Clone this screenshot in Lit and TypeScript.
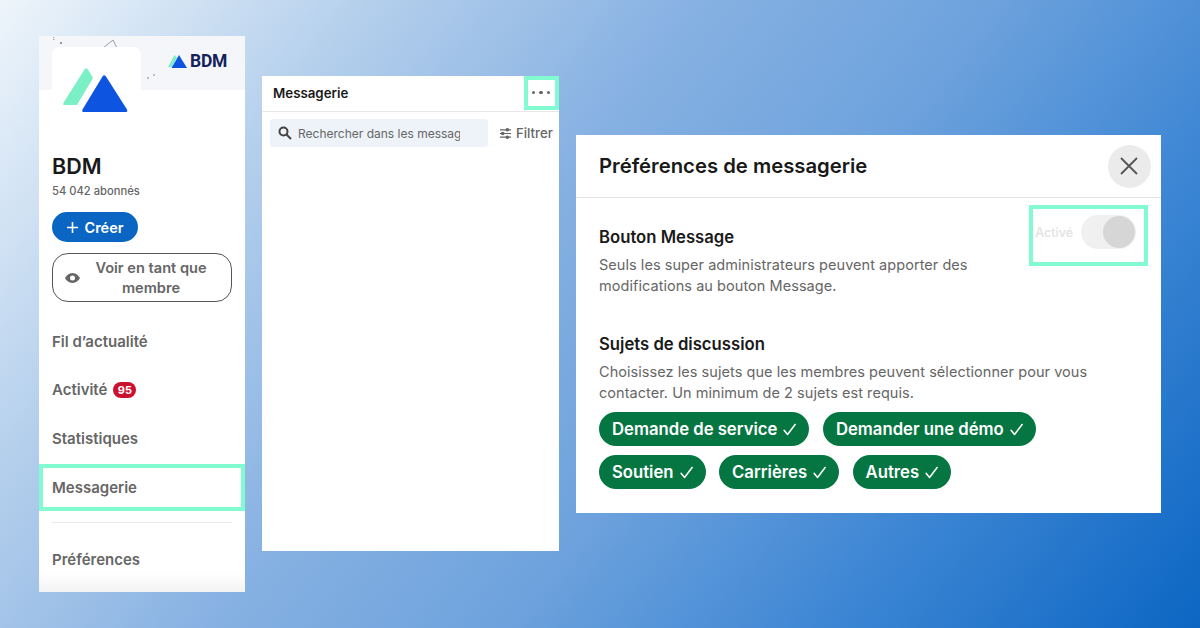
import { LitElement, html, css } from "lit";
import { customElement } from "lit/decorators.js";

const check = html`<svg class="chk" viewBox="0 0 16 16" fill="none" stroke="#fff" stroke-width="1.6" stroke-linecap="round" stroke-linejoin="round"><path d="M2.2 8.8 L5.9 13.4 L14 2.6"/></svg>`;

@customElement("app-root")
export class AppRoot extends LitElement {
  static styles = css`
    :host { display: block; width: 1200px; height: 628px; overflow: hidden; font-family: Inter, "Liberation Sans", sans-serif; }
    .page { box-sizing: border-box; width: 1200px; height: 628px; display: flex; align-items: flex-start; gap: 17px; padding-left: 39px;
      background:
        linear-gradient(128deg, #eef5fb 0%, #b4cfec 22%, #85b0e2 42%, #6fa3dd 58%, #3d86d4 78%, #0c66c3 100%); }
    .card { background: #fff; box-sizing: border-box; flex: none; position: relative; }

    .side { width: 206px; height: 556px; margin-top: 36px; display: flex; flex-direction: column; background: linear-gradient(#fff 536px, #f3f3f4 556px); }
    .banner { box-sizing: border-box; height: 54px; background: #f5f6f9; flex: none; display: flex; justify-content: flex-end; align-items: center; padding: 0 18px 4px 0; gap: 3px; position: relative; }
    .banner .word { font: 700 17.5px Roboto, sans-serif; color: #16225c; letter-spacing: -0.3px; line-height: 14px; }
    .deco { position: absolute; left: 0; top: 0; width: 130px; height: 54px; }
    .logo { position: absolute; left: 13px; top: 11px; width: 89px; height: 84px; background: #fff; border-radius: 8px 8px 0 0; }
    .logo svg { display: block; }
    .sbody { padding: 63px 13px 0; display: flex; flex-direction: column; }
    .name { font-size: 21.5px; font-weight: 600; line-height: 26px; color: #191919; }
    .subs { font-size: 11.2px; font-weight: 500; line-height: 16px; color: #666; margin-top: 4px; }
    .create { margin-top: 13px; width: 86px; height: 30px; border-radius: 15px; background: #0a66c2; color: #fff; font-size: 14.5px; font-weight: 600; display: flex; align-items: center; justify-content: center; gap: 5px; }
    .view { margin-top: 11px; height: 49px; border: 1px solid #555; border-radius: 16px; box-sizing: border-box; display: flex; align-items: center; padding-left: 12px; color: #666; font-size: 14.6px; font-weight: 600; line-height: 20px; }
    .view span { flex: 1; text-align: center; padding-right: 9px; }
    .nav { display: flex; flex-direction: column; margin-top: 15px; }
    .nav > div { height: 48.6px; display: flex; align-items: center; gap: 6px; font-size: 15px; font-weight: 600; color: #666; }
    .badge { background: #cb112d; color: #fff; font-size: 11px; font-weight: 700; height: 16px; width: 23px; border-radius: 8px; display: flex; align-items: center; justify-content: center; }
    .hl { position: absolute; border: 4px solid #82fbd0; box-sizing: border-box; }
    .h1 { left: 0; top: 428px; width: 206px; height: 47px; }
    .sep { height: 1px; background: #e8e8e8; margin-top: 11px; }
    .prefs { margin-top: 12px; height: 48px; }

    .msg { width: 297px; height: 475px; margin-top: 76px; }
    .mhead { box-sizing: border-box; height: 36px; border-bottom: 1px solid #e8e8e8; display: flex; align-items: center; padding: 0 9px 2px 11px; justify-content: space-between; }
    .mhead b { font-size: 13.3px; font-weight: 600; color: #191919; }
    .dots { display: flex; gap: 4px; }
    .dots i { width: 3.5px; height: 3.5px; border-radius: 50%; background: #666; }
    .h2 { right: 0; top: 0; width: 35px; height: 34px; }
    .mrow { display: flex; align-items: center; padding: 7px 0 0 8px; gap: 11px; }
    .search { flex: none; width: 218px; height: 28px; box-sizing: border-box; background: #edf3f8; border-radius: 3px; display: flex; align-items: center; padding-left: 8px; gap: 6px; font-size: 12px; color: #666; overflow: hidden; white-space: nowrap; }
    .search span { width: 162px; overflow: hidden; }
    .filter { display: flex; align-items: center; gap: 4px; font-size: 13.2px; color: #666; font-weight: 500; white-space: nowrap; }

    .prefsc { width: 585px; height: 378px; margin-top: 135px; padding: 0; }
    .phead { box-sizing: border-box; height: 63px; border-bottom: 1px solid #e3e3e3; display: flex; align-items: center; justify-content: space-between; padding: 0 10.5px 2px 23px; }
    .phead h2 { margin: 0; font-size: 20.3px; font-weight: 600; color: #191919; }
    .close { width: 43px; height: 43px; border-radius: 50%; background: #ebebeb; display: flex; align-items: center; justify-content: center; margin-bottom: -2px; }
    .pbody { padding: 27px 23px 0; }
    h3 { margin: 0; font-size: 16.7px; font-weight: 600; line-height: 24px; color: #191919; }
    p { margin: 5px 0 0; font-size: 14.5px; line-height: 21px; color: #666; letter-spacing: 0.05px; }
    .s2 { margin-top: 36px; }
    .tog { position: absolute; right: 25px; top: 80px; display: flex; align-items: center; gap: 8px; color: #e2e2e2; font-size: 12.5px; font-weight: 500; }
    .track { width: 55px; height: 34px; border-radius: 17px; background: #f0f0f0; position: relative; }
    .knob { position: absolute; right: 1px; top: 1px; width: 32px; height: 32px; border-radius: 50%; background: #d6d6d6; }
    .h3 { right: 13px; top: 70px; width: 119px; height: 61px; }
    .pills { display: flex; flex-wrap: wrap; gap: 9px 13.5px; margin-top: 9px; width: 480px; }
    .pill { height: 34px; border-radius: 17px; background: #057642; color: #fff; font-size: 16.7px; font-weight: 600; display: flex; align-items: center; padding: 0 12px 0 13px; gap: 5px; white-space: nowrap; }
    .chk { width: 15px; height: 15px; }
  `;

  render() {
    return html`<div class="page">
      <div class="card side">
        <div class="banner">
          <svg class="deco" viewBox="0 0 130 54" fill="none"><circle cx="22" cy="7" r="1" fill="#777"/><path d="M14 1.500h1.500M14 3.500h1.500" stroke="#aaa"/><path d="M64 12 L74 4 L78 12" stroke="#888" stroke-width=".8"/><circle cx="109" cy="42" r=".8" fill="#777"/><circle cx="115" cy="39" r=".8" fill="#777"/></svg>
          <svg width="19" height="14" viewBox="0 0 19 14"><path d="M0 13 L6.500 1 L9 3.500 L4 13Z" fill="#7bf0c6"/><path d="M3.500 14 L11 1 L19 14Z" fill="#0d55e0"/></svg>
          <span class="word">BDM</span>
        </div>
        <div class="logo"><svg width="89" height="84" viewBox="0 0 89 84"><path d="M11.500 58 Q10.500 57.500 12 55 L32.500 22.500 Q34 20 36 22.500 L41 31 L25 58Z" fill="#7bf0c6"/><path d="M31 65 Q29.500 64.500 30.500 62.500 L50.500 29.500 Q52 27 54 29.500 L75 62.500 Q76 65 74 65Z" fill="#0d55e0"/></svg></div>
        <div class="sbody">
          <div class="name">BDM</div>
          <div class="subs">54 042 abonnés</div>
          <div class="create"><svg width="13" height="13" viewBox="0 0 13 13" stroke="#fff" stroke-width="1.600"><path d="M6.500 1v11M1 6.500h11"/></svg>Créer</div>
          <div class="view"><svg width="15" height="10" viewBox="0 0 15 10"><path fill="#666" fill-rule="evenodd" d="M7.500 0C11 0 14 3 15 5c-1 2-4 5-7.500 5S1 7 0 5c1-2 4-5 7.500-5Zm0 2.500a2.500 2.500 0 1 0 0 5 2.500 2.500 0 0 0 0-5Z"/></svg><span>Voir en tant que membre</span></div>
          <div class="nav">
            <div>Fil d’actualité</div>
            <div>Activité <span class="badge">95</span></div>
            <div>Statistiques</div>
            <div>Messagerie</div>
          </div>
          <div class="sep"></div>
          <div class="nav prefs"><div>Préférences</div></div>
        </div>
        <div class="hl h1"></div>
      </div>

      <div class="card msg">
        <div class="mhead"><b>Messagerie</b><div class="dots"><i></i><i></i><i></i></div></div>
        <div class="hl h2"></div>
        <div class="mrow">
          <div class="search"><svg width="14" height="14" viewBox="0 0 14 14" fill="none" stroke="#444" stroke-width="2"><circle cx="5.500" cy="5.500" r="4"/><path d="M8.500 8.500 13 13"/></svg><span>Rechercher dans les messages</span></div>
          <div class="filter"><svg width="13" height="13" viewBox="0 0 14 14" stroke="#666" stroke-width="1.300" fill="#666"><path d="M1 3h12M1 7h12M1 11h12"/><circle cx="9" cy="3" r="1.300"/><circle cx="4" cy="7" r="1.300"/><circle cx="9" cy="11" r="1.300"/></svg>Filtrer</div>
        </div>
      </div>

      <div class="card prefsc">
        <div class="phead"><h2>Préférences de messagerie</h2>
          <div class="close"><svg width="18" height="18" viewBox="0 0 18 18" stroke="#555" stroke-width="1.800"><path d="M1 1 17 17M17 1 1 17"/></svg></div></div>
        <div class="pbody">
          <h3>Bouton Message</h3>
          <p>Seuls les super administrateurs peuvent apporter des<br>modifications au bouton Message.</p>
          <h3 class="s2">Sujets de discussion</h3>
          <p>Choisissez les sujets que les membres peuvent sélectionner pour vous<br>contacter. Un minimum de 2 sujets est requis.</p>
          <div class="pills">
            <div class="pill">Demande de service ${check}</div>
            <div class="pill">Demander une démo ${check}</div>
            <div class="pill">Soutien ${check}</div>
            <div class="pill">Carrières ${check}</div>
            <div class="pill">Autres ${check}</div>
          </div>
        </div>
        <div class="tog">Activé<div class="track"><div class="knob"></div></div></div>
        <div class="hl h3"></div>
      </div>
    </div>`;
  }
}
